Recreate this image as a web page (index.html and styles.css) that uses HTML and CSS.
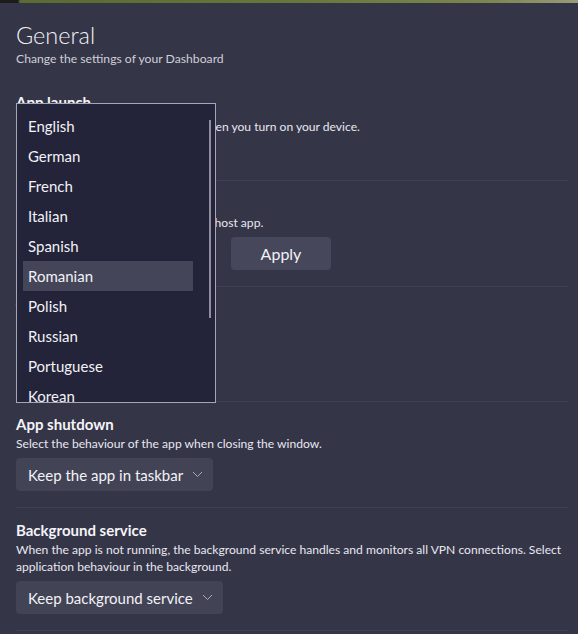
FILE: index.html
```html
<!DOCTYPE html>
<html lang="en">
<head>
    <meta charset="UTF-8">
    <meta name="viewport" content="width=device-width, initial-scale=1.0">
    <title>Settings - General</title>
    <link rel="stylesheet" href="styles.css">
</head>
<body>
    <div class="strip"></div>
    <main class="page">
        <header class="head">
            <h1>General</h1>
            <p>Change the settings of your Dashboard</p>
        </header>

        <section class="setting launch">
            <h2>App launch</h2>
            <p>Start the Dashboard automatically when you turn on your device.</p>
            <div class="toggle"><span class="knob"></span></div>
        </section>

        <section class="setting">
            <h2>Language</h2>
            <p>Choose the interface language of the host app.</p>
            <div class="controls">
                <div class="select lang">Romanian
                    <svg class="chev" width="11" height="7" viewBox="0 0 11 7"><polyline points="1,1 5.5,5.5 10,1"/></svg>
                </div>
                <button class="apply">Apply</button>
            </div>
        </section>

        <section class="setting">
            <h2>Theme</h2>
            <p>Pick a colour.</p>
            <div class="swatches">
                <span class="dot"></span><span class="dot"></span><span class="dot"></span>
            </div>
        </section>

        <section class="setting">
            <h2>App shutdown</h2>
            <p>Select the behaviour of the app when closing the window.</p>
            <div class="select">Keep the app in taskbar
                <svg class="chev" width="11" height="7" viewBox="0 0 11 7"><polyline points="1,1 5.5,5.5 10,1"/></svg>
            </div>
        </section>

        <section class="setting">
            <h2>Background service</h2>
            <p>When the app is not running, the background service handles and monitors all VPN connections. Select application behaviour in the background.</p>
            <div class="select">Keep background service
                <svg class="chev" width="11" height="7" viewBox="0 0 11 7"><polyline points="1,1 5.5,5.5 10,1"/></svg>
            </div>
        </section>
    </main>

    <div class="popup">
        <ul class="options">
            <li>English</li>
            <li>German</li>
            <li>French</li>
            <li>Italian</li>
            <li>Spanish</li>
            <li class="active">Romanian</li>
            <li>Polish</li>
            <li>Russian</li>
            <li>Portuguese</li>
            <li>Korean</li>
        </ul>
        <div class="scroll"></div>
    </div>
</body>
</html>
```

FILE: styles.css
```css
*{
    margin: 0;
    padding: 0;
    box-sizing: border-box;
}
body{
    background: #353548;
    color: #ececf2;
    font-family: Lato, "Noto Sans", sans-serif;
    height: 634px;
    overflow: hidden;
}
.strip{
    height: 3px;
    background: linear-gradient(90deg, #1c1c1c 0, #1c1c1c 18px, #5a6b33 20px, #66773a 50%, #7c8650 85%, #9a9b78 100%);
}
.page{
    padding: 17px 10px 0 16px;
}
.head h1{
    font-size: 23.5px;
    font-weight: 300;
    line-height: 30px;
    color: #f2f2f6;
}
.head p{
    font-size: 12.2px;
    line-height: 17px;
    color: #cfcfd8;
}
.head{
    margin-bottom: 13px;
}
.setting{
    padding: 12px 0 16px;
    border-bottom: 1px solid #3f3f53;
}
.setting h2{
    font-size: 15px;
    font-weight: 700;
    line-height: 20px;
    color: #f4f4f8;
}
.setting p{
    font-size: 12.1px;
    line-height: 17px;
    margin-top: 1px;
    color: #e8e8f0;
}
.launch p{
    margin-top: 6px;
}
.toggle{
    margin-top: 6px;
    width: 44px;
    height: 23px;
    border-radius: 12px;
    background: #5b5bd6;
    position: relative;
}
.knob{
    position: absolute;
    top: 5px;
    right: 5px;
    width: 13px;
    height: 13px;
    border-radius: 50%;
    background: #fff;
}
.controls{
    display: flex;
    gap: 15px;
    margin-top: 6px;
}
.controls .select{
    margin-top: 0;
}
.select{
    display: inline-flex;
    align-items: center;
    gap: 9px;
    height: 33px;
    margin-top: 6px;
    padding: 0 10px 0 12px;
    background: #434356;
    border-radius: 4px;
    font-size: 15px;
    color: #f2f2f6;
}
.select.lang{
    width: 200px;
    justify-content: space-between;
}
.chev{
    fill: none;
    stroke: #a9a9b9;
    stroke-width: 1;
}
.apply{
    width: 100px;
    height: 33px;
    border: none;
    border-radius: 4px;
    background: #47475b;
    color: #f2f2f6;
    font-family: inherit;
    font-size: 16px;
}
.swatches{
    display: flex;
    gap: 10px;
    height: 42px;
    margin-top: 6px;
    align-items: center;
}
.dot{
    width: 30px;
    height: 30px;
    border-radius: 50%;
    background: #5b5bd6;
}
.popup{
    position: absolute;
    top: 103px;
    left: 16px;
    width: 200px;
    height: 300px;
    background: #232339;
    border: 1px solid #a6a6b6;
    overflow: hidden;
}
.options{
    list-style: none;
    padding: 7px 0 0 6px;
}
.options li{
    width: 170px;
    height: 30px;
    line-height: 30px;
    padding-left: 5px;
    font-size: 15px;
    color: #f2f2f6;
}
.options li.active{
    background: #45455a;
}
.scroll{
    position: absolute;
    top: 16px;
    right: 4px;
    width: 2px;
    height: 198px;
    background: #8e8e9e;
}
```
